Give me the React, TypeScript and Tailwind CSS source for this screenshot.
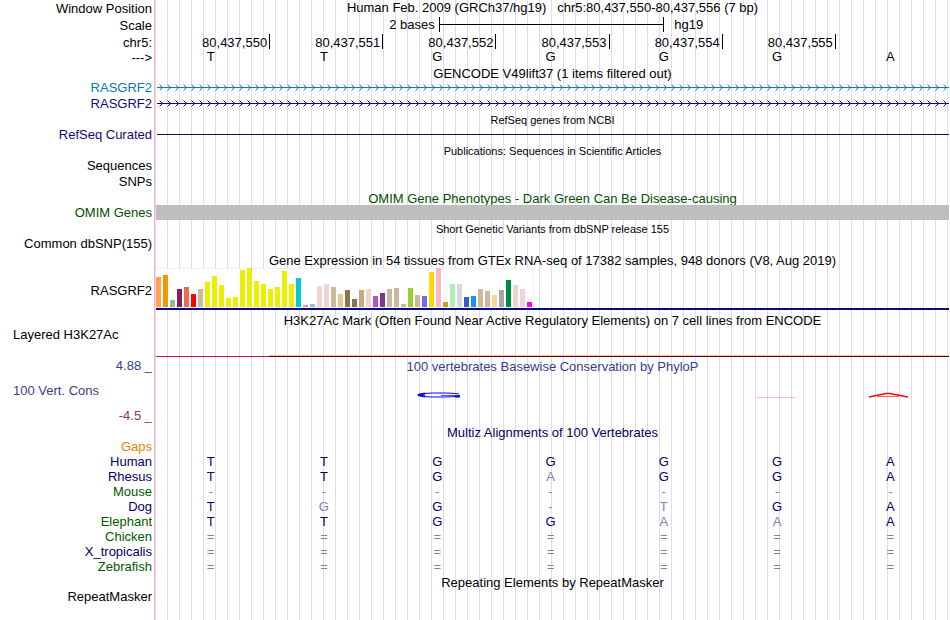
import type { ReactNode } from "react";

const bases = ["T", "T", "G", "G", "G", "G", "A"];

const positions = [
  "80,437,550",
  "80,437,551",
  "80,437,552",
  "80,437,553",
  "80,437,554",
  "80,437,555",
];

const alignments = [
  { name: "Human", color: "text-[#000064]", seq: "TTGGGGA" },
  { name: "Rhesus", color: "text-[#000064]", seq: "TTGAGGA" },
  { name: "Mouse", color: "text-[#005a00]", seq: "-------" },
  { name: "Dog", color: "text-[#000064]", seq: "TGG-TGA" },
  { name: "Elephant", color: "text-[#005a00]", seq: "TTGGAAA" },
  { name: "Chicken", color: "text-[#005a00]", seq: "=======" },
  { name: "X_tropicalis", color: "text-[#000064]", seq: "=======" },
  { name: "Zebrafish", color: "text-[#005a00]", seq: "=======" },
];

// GTEx tissue color and bar height in pixels
const tissues: [string, number][] = [
  ["#ffa54f", 30], ["#ee9a00", 32], ["#8fbc8f", 7], ["#8b1c62", 18], ["#ee6a50", 20], ["#ff0000", 13],
  ["#cdb79e", 18], ["#eeee00", 25], ["#eeee00", 31], ["#eeee00", 22], ["#eeee00", 9], ["#eeee00", 10],
  ["#eeee00", 37], ["#eeee00", 39], ["#eeee00", 26], ["#eeee00", 23], ["#eeee00", 18], ["#eeee00", 20],
  ["#eeee00", 36], ["#eeee00", 23], ["#00cdcd", 29], ["#ee82ee", 2], ["#9ac0cd", 3], ["#eed5d2", 21],
  ["#eed5d2", 23], ["#cdb79e", 20], ["#eec591", 13], ["#8b7355", 17], ["#8b7355", 8], ["#cdaa7d", 17],
  ["#eed5d2", 18], ["#b452cd", 11], ["#7a378b", 14], ["#cdb79e", 18], ["#cdb79e", 19], ["#cdb79e", 3],
  ["#9acd32", 19], ["#cdb79e", 12], ["#7a67ee", 11], ["#ffd700", 35], ["#ffb6c1", 39], ["#cd9b1d", 5],
  ["#b4eeb4", 23], ["#d9d9d9", 23], ["#3a5fcd", 10], ["#1e90ff", 11], ["#cdb79e", 18], ["#cdb79e", 16],
  ["#ffd39b", 12], ["#a6a6a6", 17], ["#008b45", 27], ["#eed5d2", 22], ["#eed5d2", 18], ["#ff00ff", 5],
];

type RowProps = {
  label?: ReactNode;
  height?: string;
  labelClass?: string;
  className?: string;
  children?: ReactNode;
};

function Row({ label, height = "h-4", labelClass = "", className = "", children }: RowProps) {
  return (
    <div className={`flex ${height}`}>
      <div className={`w-[154px] shrink-0 pr-0.5 text-right leading-[17px] whitespace-nowrap ${labelClass}`}>
        {label}
      </div>
      <div className={`ml-0.5 mr-px min-w-0 flex-1 ${className}`}>{children}</div>
    </div>
  );
}

type TitleProps = {
  children: ReactNode;
  height?: string;
  size?: string;
  color?: string;
  label?: ReactNode;
  labelClass?: string;
};

function Title({ children, height = "h-[15px]", size = "text-[13px]", color = "", label, labelClass }: TitleProps) {
  return (
    <Row height={height} label={label} labelClass={labelClass} className="flex items-end justify-center">
      <h2 className={`whitespace-nowrap leading-[11px] ${size} ${color}`}>{children}</h2>
    </Row>
  );
}

function Transcript({ id, color, line }: { id: string; color: string; line: string }) {
  return (
    <Row label={<a href="#transcript">RASGRF2</a>} labelClass={color} className="flex items-center pl-px">
      <svg className={`h-[7px] w-full ${color}`} shapeRendering="crispEdges" aria-hidden="true">
        <defs>
          <pattern id={id} width="8" height="7" patternUnits="userSpaceOnUse">
            <path d="M3 1h1v1h-1zM4 2h1v1h-1zM5 3h1v1h-1zM4 4h1v1h-1zM3 5h1v1h-1z" fill="currentColor" />
            <path d="M2 0h1v1h-1zM2 6h1v1h-1z" fill="currentColor" fillOpacity=".35" />
          </pattern>
        </defs>
        <rect width="100%" height="7" fill={`url(#${id})`} />
        <rect y="3" width="100%" height="1" fill={line} />
      </svg>
    </Row>
  );
}

export default function App() {
  return (
    <main className="min-h-screen overflow-hidden bg-white bg-[linear-gradient(to_right,white_154px,#ffb4b4_154px,#ffb4b4_155px,transparent_155px),repeating-linear-gradient(to_right,transparent_0px,transparent_11px,#dcdcf8_11px,#dcdcf8_12px)] font-['Liberation_Sans',Arial,sans-serif] text-[13px] text-black">
      <Row height="h-[17px]" label="Window Position" className="flex justify-center">
        <h1 className="whitespace-pre leading-[15px]">
          {"Human Feb. 2009 (GRCh37/hg19)   chr5:80,437,550-80,437,556 (7 bp)"}
        </h1>
      </Row>
      <Row height="h-[17px]" label="Scale" className="grid grid-cols-7 pl-1 leading-[15px]">
        <div className="col-span-3 col-start-3 flex">
          <span className="flex-1 pr-1 text-right">2 bases</span>
          <span className="flex h-[15px] w-2/3 items-center border-x border-black">
            <span className="h-px w-full bg-black" />
          </span>
          <span className="flex-1 pl-2.5">hg19</span>
        </div>
      </Row>
      <Row height="h-[15px]" label="chr5:" className="grid grid-cols-7 pl-px">
        {positions.map((p) => (
          <span key={p} className="h-[15px] border-r border-black pr-0.5 text-right leading-[17px]">
            {p}
          </span>
        ))}
      </Row>
      <div className="flex h-[17px] pr-[3px]">
        <span className="w-[154px] pr-0.5 text-right leading-[17px]">---&gt;</span>
        <div className="grid flex-1 grid-cols-7 text-center leading-[15px]">
          {bases.map((b, i) => (
            <span key={i}>{b}</span>
          ))}
        </div>
      </div>

      <Title height="h-[13px]">GENCODE V49lift37 (1 items filtered out)</Title>
      <Transcript id="exonCoding" color="text-[#0c78b4]" line="#0c78b4" />
      <Transcript id="exonBasic" color="text-[#0c0c78]" line="#0c0c78" />

      <Title size="text-[11px]">RefSeq genes from NCBI</Title>
      <Row label="RefSeq Curated" labelClass="text-[#0c0c78]" className="flex items-center pl-px">
        <div className="h-px w-full bg-[#0c0c78]" />
      </Row>

      <Title size="text-[11px]">Publications: Sequences in Scientific Articles</Title>
      <Row label="Sequences" />
      <Row label="SNPs" />

      <Title color="text-[#005000]">OMIM Gene Phenotypes - Dark Green Can Be Disease-causing</Title>
      <Row label="OMIM Genes" labelClass="text-[#005000]" className="flex items-end">
        <div className="h-[15px] w-full bg-[#bebebe]" />
      </Row>

      <Title size="text-[11px]">Short Genetic Variants from dbSNP release 155</Title>
      <Row label="Common dbSNP(155)" />

      <Title>Gene Expression in 54 tissues from GTEx RNA-seq of 17382 samples, 948 donors (V8, Aug 2019)</Title>
      <Row height="h-11" label="RASGRF2" labelClass="pt-4" className="flex flex-col justify-end">
        <div className="flex h-10 w-[378px] items-end gap-0.5 border-r border-b border-[#f0f0f0] bg-white shadow-[inset_0_1px_0_#f0f0f0]">
          {tissues.map(([color, height], i) => (
            <div key={i} className="w-[5px] shrink-0" style={{ height, backgroundColor: color }} />
          ))}
        </div>
        <div className="h-0.5 bg-[#0c0c78]" />
      </Row>

      <Title height="h-4">H3K27Ac Mark (Often Found Near Active Regulatory Elements) on 7 cell lines from ENCODE</Title>
      <Row
        height="h-[31px]"
        label={<span className="block pl-[13px] text-left">Layered H3K27Ac</span>}
        className="grid grid-cols-7 items-end"
      >
        <div className="h-px bg-[#d2143c]" />
        <div className="col-span-6 h-0.5 border-t border-[#f5c88c] bg-[#5a0028]" />
      </Row>

      <Title label="4.88 _" labelClass="text-[#3c3c8c]" color="text-[#3c3c8c]">
        100 vertebrates Basewise Conservation by PhyloP
      </Title>
      <div className="flex h-[51px] pr-[3px]">
        <div className="flex w-[154px] flex-col gap-2 pt-2.5 leading-[17px]">
          <span className="pl-[13px] text-[#3c3c8c]">100 Vert. Cons</span>
          <span className="pr-0.5 text-right text-[#8c3c3c]">-4.5 _</span>
        </div>
        <div className="grid flex-1 grid-cols-7 justify-items-center pt-5">
          <svg className="col-start-3 h-1.5 w-12" viewBox="0 0 48 6" fill="none" aria-hidden="true">
            <path d="M46 2C40 1 33 1 24 1C12 1 6 2 6 3C6 4.200 12 5 24 5C35 5 42 5 46 3.500" stroke="#0000ff" strokeWidth="1" />
            <path d="M12 1.500L5 3L12 4.500" stroke="#0000ff" strokeWidth="2" />
            <path d="M28 3.500H47" stroke="#5050ff" />
            <path d="M42 4.500H47" stroke="#0000ff" strokeWidth="2" />
          </svg>
          <svg className="col-start-6 h-1.5 w-10" viewBox="0 0 40 6" fill="none" aria-hidden="true">
            <path d="M0 5.500H38" stroke="#ff0000" strokeOpacity=".4" strokeWidth=".7" />
          </svg>
          <svg className="col-start-7 h-1.5 w-11" viewBox="0 0 44 6" fill="none" aria-hidden="true">
            <path d="M1 5L18 1.500H22L40 5" stroke="#ff0000" strokeWidth="1.500" />
            <path d="M9 4.500H31" stroke="#ff0000" strokeOpacity=".6" />
          </svg>
        </div>
      </div>

      <Title color="text-[#000064]">Multiz Alignments of 100 Vertebrates</Title>
      <div className="pr-[3px]">
        <table className="w-full table-fixed border-collapse leading-[15px] text-[#000064]">
          <tbody>
            <tr>
              <th scope="row" className="w-[154px] p-0 pt-px pr-0.5 text-right font-normal text-[#e68200]">Gaps</th>
              <td colSpan={7} />
            </tr>
            {alignments.map((row) => (
              <tr key={row.name}>
                <th scope="row" className={`p-0 pr-0.5 text-right font-normal ${row.color}`}>{row.name}</th>
                {row.seq.split("").map((base, i) => (
                  <td key={i} className={`p-0 text-center ${base === bases[i] ? "" : "text-[#8080b4]"}`}>
                    {base}
                  </td>
                ))}
              </tr>
            ))}
          </tbody>
        </table>
      </div>

      <Title height="h-3.5">Repeating Elements by RepeatMasker</Title>
      <Row label="RepeatMasker" />
    </main>
  );
}
